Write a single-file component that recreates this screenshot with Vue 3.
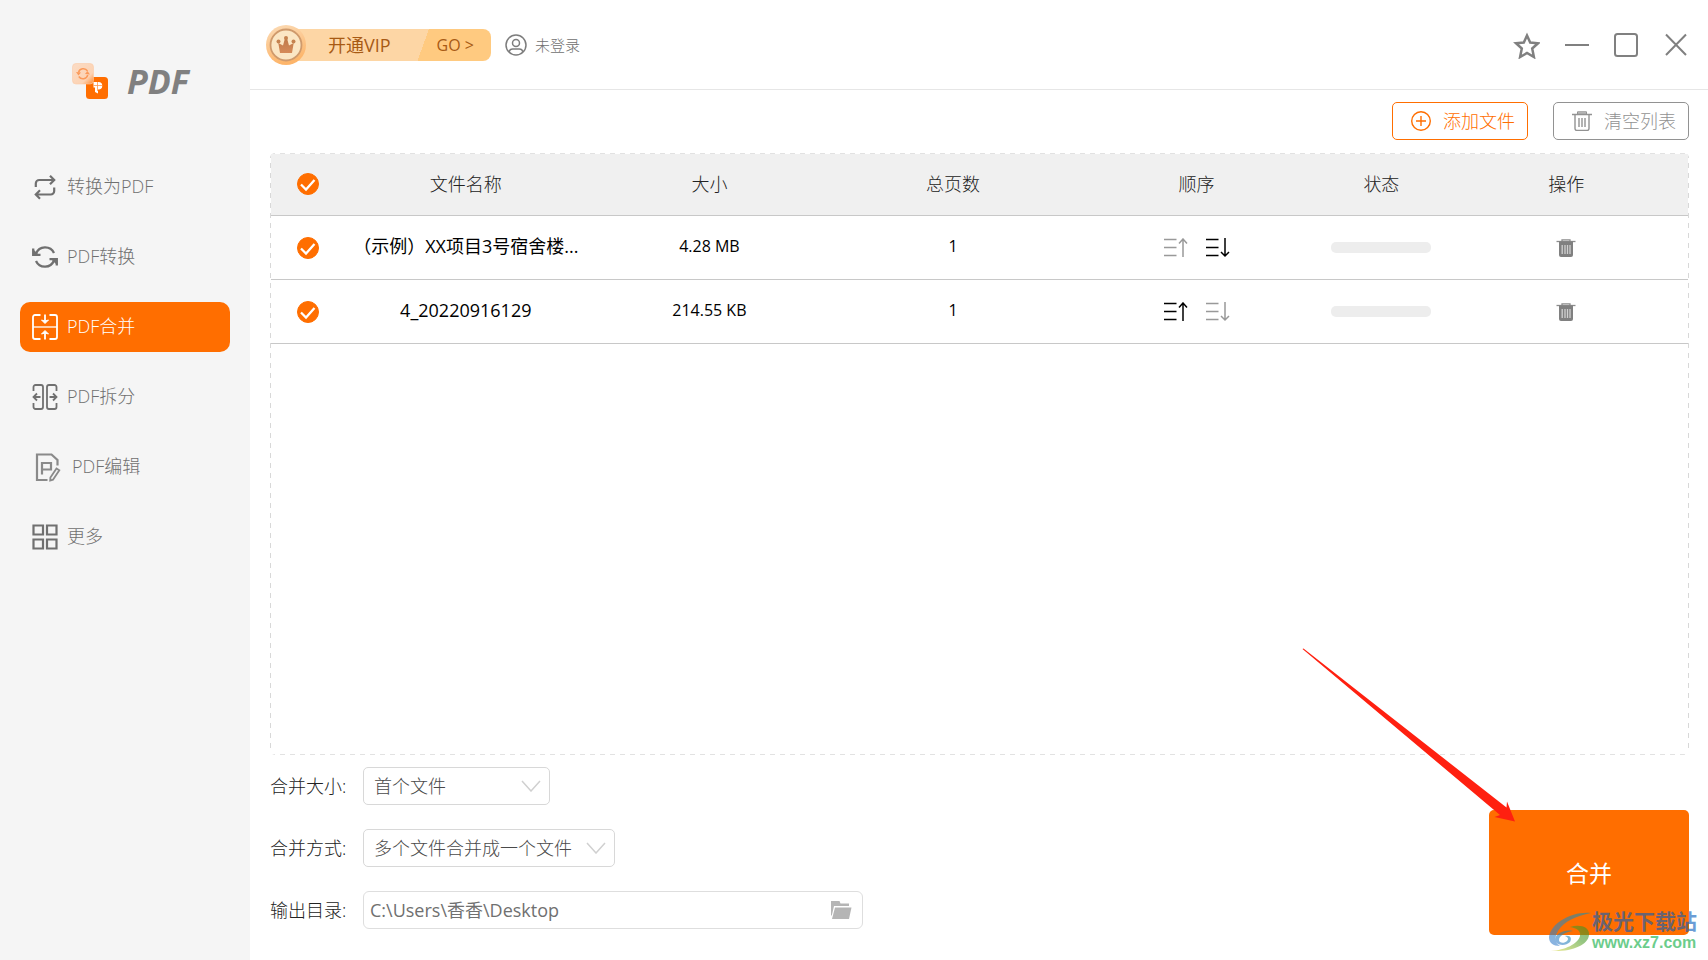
<script setup>
import { ref } from 'vue'

const navItems = [
  { id: 'to-pdf', label: '转换为PDF' },
  { id: 'convert', label: 'PDF转换' },
  { id: 'merge', label: 'PDF合并' },
  { id: 'split', label: 'PDF拆分' },
  { id: 'edit', label: 'PDF编辑' },
  { id: 'more', label: '更多' }
]
const active = ref('merge')

const files = ref([
  { name: '（示例）XX项目3号宿舍楼...', size: '4.28 MB', pages: 1, checked: true },
  { name: '4_20220916129', size: '214.55 KB', pages: 1, checked: true }
])
const allChecked = ref(true)
const mergeSize = ref('首个文件')
const mergeMode = ref('多个文件合并成一个文件')
const outputDir = ref('C:\\Users\\香香\\Desktop')
</script>

<template>
  <div class="app">
    <aside class="sidebar">
      <div class="brand">
        <svg class="brand-icon" width="36" height="36" viewBox="0 0 36 36">
          <defs>
            <linearGradient id="brandFade" x1="0" y1="0" x2="1" y2="1">
              <stop offset="0" stop-color="#fbdcc5" />
              <stop offset="0.7" stop-color="#fcd3b4" />
              <stop offset="1" stop-color="#ff8a30" />
            </linearGradient>
          </defs>
          <rect x="14" y="14" width="22" height="22" rx="3.5" fill="#ff6e00" />
          <rect x="0.5" y="0.5" width="21" height="20.5" rx="3.5" fill="url(#brandFade)" stroke="#fbcba8" stroke-width="0.6" />
          <g fill="none" stroke="#fb9a5a" stroke-width="1.5">
            <path d="M6.500 9.500a5 5 0 0 1 9-1.500" />
            <path d="M15.800 12a5 5 0 0 1-9 1.500" />
          </g>
          <path d="M4 9l5 .5-2.500 3zM18 11.500l-5-.5 2.500-3z" fill="#fb9a5a" />
          <path d="M21.500 19h5a3.700 3.700 0 0 1 0 7.500H26v4l-3-1.500v-4.500h-1.500z" fill="#fff" />
          <path d="M21.500 22.500h8.500M25.500 19v9" stroke="#ff9a50" stroke-width="0.8" />
        </svg>
        <span class="brand-name">PDF</span>
      </div>

      <nav class="nav">
        <button
          v-for="item in navItems"
          :key="item.id"
          type="button"
          class="nav-item"
          :class="{ active: active === item.id }"
          @click="active = item.id"
        >
          <svg v-if="item.id === 'to-pdf'" width="26" height="26" viewBox="0 0 26 26" fill="none" stroke="currentColor" stroke-width="2.200">
            <path d="M3.800 13V9.500a3.500 3.500 0 0 1 3.500-3.500H22M18 1.800L22.200 6 18 10.200" />
            <path d="M22.200 13.500V17a3.500 3.500 0 0 1-3.500 3.500H4M8 16.300L3.800 20.500 8 24.700" />
          </svg>
          <svg v-else-if="item.id === 'convert'" width="26" height="26" viewBox="0 0 26 26" fill="none" stroke="currentColor" stroke-width="2.300">
            <path d="M4 9.500a9.800 9.800 0 0 1 18-.5" />
            <path d="M22 16.500a9.800 9.800 0 0 1-18 .5" />
            <path d="M1.200 4.500v6.300h7.300M24.800 21.500v-6.300h-7.300" />
            <path d="M1 5l6 6H1zM25 21l-6-6h6z" fill="currentColor" stroke="none" />
          </svg>
          <svg v-else-if="item.id === 'merge'" width="26" height="26" viewBox="0 0 26 26" fill="none" stroke="currentColor" stroke-width="1.800">
            <path d="M8.500 1H3a2 2 0 0 0-2 2v20a2 2 0 0 0 2 2h5.500M17.500 1H23a2 2 0 0 1 2 2v20a2 2 0 0 1-2 2h-5.500" />
            <path d="M1 13h24" stroke-width="1.300" />
            <path d="M13 .5V8M13 25.500V18" />
            <path d="M9.500 6l3.500 3.500L16.500 6 13 7zM9.500 20l3.500-3.500 3.500 3.500L13 19z" fill="currentColor" stroke-width="1" />
          </svg>
          <svg v-else-if="item.id === 'split'" width="26" height="26" viewBox="0 0 26 26" fill="none" stroke="currentColor" stroke-width="1.800">
            <path d="M1.500 7V3a2 2 0 0 1 2-2h5.500a2 2 0 0 1 2 2v20a2 2 0 0 1-2 2H3.500a2 2 0 0 1-2-2v-4" />
            <path d="M24.500 7V3a2 2 0 0 0-2-2H17a2 2 0 0 0-2 2v20a2 2 0 0 0 2 2h5.500a2 2 0 0 0 2-2v-4" />
            <path d="M8.500 13H2M5 9.500L1.500 13 5 16.500M17.500 13H24M21 9.500l3.500 3.500-3.500 3.500" />
          </svg>
          <svg v-else-if="item.id === 'edit'" width="31" height="30" viewBox="0 0 31 30" fill="none" stroke="currentColor" stroke-width="2.200" opacity="0.8">
            <path d="M15.500 28H5V2.500h14.500l6 5.500v5.500" />
            <path d="M10 22.500V11h9v6.500h-9" />
            <path d="M24.500 16.500l2.800 1.700-6.300 9.500-2.800.8.200-3z" stroke-width="1.800" />
          </svg>
          <svg v-else width="26" height="26" viewBox="0 0 26 26" fill="none" stroke="currentColor" stroke-width="2.200">
            <path d="M1.500 1.500h9.500v9h-9.500zM15 1.500h9.500v9H15zM1.500 15.500h9.500v9h-9.500zM15 15.500h9.500v9H15z" />
          </svg>
          <span>{{ item.label }}</span>
        </button>
      </nav>
    </aside>

    <main class="main">
      <header class="topbar">
        <button type="button" class="vip">
          <svg class="medal" width="40" height="40" viewBox="0 0 40 40">
            <defs>
              <linearGradient id="medalOuter" x1="0" y1="0" x2="0.3" y2="1">
                <stop offset="0" stop-color="#fbdcb8" />
                <stop offset="1" stop-color="#fdb56a" />
              </linearGradient>
              <linearGradient id="medalCrown" x1="0" y1="0" x2="0" y2="1">
                <stop offset="0" stop-color="#c07a4a" />
                <stop offset="1" stop-color="#d58a58" />
              </linearGradient>
            </defs>
            <circle cx="20" cy="20" r="20" fill="url(#medalOuter)" />
            <circle cx="20" cy="20" r="15.500" fill="#fbe6c4" stroke="#cf9a6c" stroke-width="1.800" />
            <path d="M14 28L12.300 18l4.700 2.500 1.800-6.500h2.400l1.800 6.500 4.700-2.500L26 28z" fill="url(#medalCrown)" />
            <circle cx="12.500" cy="16.500" r="2" fill="#c5824f" />
            <circle cx="20" cy="13" r="2" fill="#c5824f" />
            <circle cx="27.500" cy="16.500" r="2" fill="#c5824f" />
          </svg>
          <span class="vip-bar">
            <span class="vip-title">开通VIP</span>
            <span class="vip-go">GO &gt;</span>
          </span>
        </button>
        <button type="button" class="login">
          <svg width="22" height="22" viewBox="0 0 22 22" fill="none" stroke="#7d7d7d" stroke-width="1.500">
            <circle cx="11" cy="11" r="10" />
            <circle cx="11" cy="9" r="3.500" />
            <path d="M4.200 17.800c.5-2.500 1.800-2.800 3.500-2.800h6.600c1.700 0 3 .3 3.500 2.800" />
          </svg>
          <span>未登录</span>
        </button>
        <div class="window-controls">
          <button type="button" aria-label="收藏">
            <svg width="28" height="28" viewBox="0 0 28 28" fill="none" stroke="#808080" stroke-width="2.500">
              <path d="M15 4.500l3.200 7 7.800.8-5.800 5.200 1.700 8.500L15 22l-6.900 4 1.700-8.500L4 12.300l7.800-.8z" />
            </svg>
          </button>
          <button type="button" aria-label="最小化">
            <svg width="28" height="28" viewBox="0 0 28 28" fill="none" stroke="#808080" stroke-width="2">
              <path d="M3 14h24" />
            </svg>
          </button>
          <button type="button" aria-label="最大化">
            <svg width="28" height="28" viewBox="0 0 28 28" fill="none" stroke="#808080" stroke-width="2">
              <rect x="3" y="3" width="22" height="22" rx="2.500" />
            </svg>
          </button>
          <button type="button" aria-label="关闭">
            <svg width="28" height="28" viewBox="0 0 28 28" fill="none" stroke="#808080" stroke-width="2">
              <path d="M4 3.500l20 20.500M24 3.500l-20 20.500" />
            </svg>
          </button>
        </div>
      </header>

      <section class="content">
        <div class="actions">
          <button type="button" class="action add">
            <svg width="20" height="20" viewBox="0 0 20 20" fill="none" stroke="currentColor" stroke-width="1.400">
              <circle cx="10" cy="10" r="9.300" />
              <path d="M5 10h10M10 5v10" />
            </svg>
            <span>添加文件</span>
          </button>
          <button type="button" class="action clear">
            <svg width="20" height="20" viewBox="0 0 20 20" fill="none" stroke="currentColor" stroke-width="1.400">
              <path d="M0 3.500h20M3 3.500V17.500a2 2 0 0 0 2 2h10a2 2 0 0 0 2-2V3.500M7 7v9M10 7v9M13 7v9" />
              <path d="M5.500 3V.8h9V3z" fill="#c4c4c4" stroke-width="1" />
            </svg>
            <span>清空列表</span>
          </button>
        </div>

        <div class="panel">
          <table class="files">
            <colgroup>
              <col class="col-check">
              <col>
              <col>
              <col>
              <col>
              <col class="col-status">
              <col>
            </colgroup>
            <thead>
              <tr>
                <th>
                  <label class="check">
                    <input v-model="allChecked" type="checkbox" aria-label="全选">
                    <svg width="22" height="22" viewBox="0 0 22 22" fill="none" stroke="#fff" stroke-width="2.300"><path d="M4 11.500l5 5 8.500-9.500" /></svg>
                  </label>
                </th>
                <th>文件名称</th>
                <th>大小</th>
                <th>总页数</th>
                <th>顺序</th>
                <th>状态</th>
                <th>操作</th>
              </tr>
            </thead>
            <tbody>
              <tr v-for="(file, index) in files" :key="file.name">
                <td>
                  <label class="check">
                    <input v-model="file.checked" type="checkbox" :aria-label="file.name">
                    <svg width="22" height="22" viewBox="0 0 22 22" fill="none" stroke="#fff" stroke-width="2.300"><path d="M4 11.500l5 5 8.500-9.500" /></svg>
                  </label>
                </td>
                <td class="text name">{{ file.name }}</td>
                <td class="text">{{ file.size }}</td>
                <td class="text">{{ file.pages }}</td>
                <td>
                  <div class="order">
                    <button type="button" aria-label="上移" :disabled="index === 0">
                      <svg width="24" height="20" viewBox="0 0 24 20" fill="none" stroke="currentColor" stroke-width="1.500">
                        <path d="M0 1.500h12.500M0 9.500h12.500M0 17.500h12.500M19 19V1M15 5.500l4-4.500 4 4.500" />
                      </svg>
                    </button>
                    <button type="button" aria-label="下移" :disabled="index === files.length - 1">
                      <svg width="24" height="20" viewBox="0 0 24 20" fill="none" stroke="currentColor" stroke-width="1.500">
                        <path d="M0 1.500h12.500M0 9.500h12.500M0 17.500h12.500M19 0v18M15 14l4 4 4-4" />
                      </svg>
                    </button>
                  </div>
                </td>
                <td><div class="progress" role="progressbar" aria-valuenow="0" aria-label="状态"></div></td>
                <td>
                  <button type="button" class="remove" aria-label="删除">
                    <svg width="20" height="18" viewBox="0 0 20 18">
                      <path d="M.5 2.500h19" stroke="#8c8c8c" stroke-width="1.300" />
                      <path d="M6 2.500V.8h8v1.700" fill="none" stroke="#8c8c8c" stroke-width="1.300" />
                      <path d="M3 2.500h14V16a2 2 0 0 1-2 2H5a2 2 0 0 1-2-2z" fill="#808080" />
                      <path d="M6.200 6v9M9 6v9M11.500 6v9M14 6v9" stroke="#d0d0d0" stroke-width="1.300" />
                    </svg>
                  </button>
                </td>
              </tr>
            </tbody>
          </table>
        </div>

        <div class="footer">
          <form class="settings" @submit.prevent>
            <div class="field">
              <label for="merge-size">合并大小:</label>
              <div class="select size">
                <select id="merge-size" v-model="mergeSize">
                  <option>首个文件</option>
                </select>
                <svg width="20" height="12" viewBox="0 0 20 12" fill="none" stroke="#d0d0d0" stroke-width="1.500"><path d="M1 1l9 10 9-10" /></svg>
              </div>
            </div>
            <div class="field">
              <label for="merge-mode">合并方式:</label>
              <div class="select mode">
                <select id="merge-mode" v-model="mergeMode">
                  <option>多个文件合并成一个文件</option>
                </select>
                <svg width="20" height="12" viewBox="0 0 20 12" fill="none" stroke="#d0d0d0" stroke-width="1.500"><path d="M1 1l9 10 9-10" /></svg>
              </div>
            </div>
            <div class="field">
              <label for="output-dir">输出目录:</label>
              <div class="path">
                <input id="output-dir" v-model="outputDir" type="text">
                <button type="button" aria-label="选择目录">
                  <svg width="21" height="18" viewBox="0 0 21 18" fill="#b5b5b5">
                    <path d="M0 0h8.500l1 2.500H18V5H3L.8 14.500H0z" />
                    <path d="M4 6.500h16.500L18 18H1z" />
                  </svg>
                </button>
              </div>
            </div>
          </form>
          <button type="button" class="merge">合并</button>
        </div>
      </section>
    </main>

    <svg class="arrow" width="214" height="174" viewBox="0 0 214 174">
      <path d="M.5 1L1.500.500L204.500 159.500L205 153.500L213 173.500L192.500 169L198 167z" fill="#ff2010" />
    </svg>

    <div class="watermark">
      <svg width="44" height="42" viewBox="0 0 44 42">
        <defs>
          <linearGradient id="swirlBlue" x1="0" y1="1" x2="1" y2="0">
            <stop offset="0" stop-color="#3f7fd0" />
            <stop offset="1" stop-color="#1a8fa8" />
          </linearGradient>
          <linearGradient id="swirlGreen" x1="0" y1="1" x2="1" y2="0">
            <stop offset="0" stop-color="#e8e050" />
            <stop offset="0.6" stop-color="#50a030" />
            <stop offset="1" stop-color="#409020" />
          </linearGradient>
        </defs>
        <path d="M43 2C24 0 3 12 1 26c0 6 4 9 11 9-5-3-6-8-2-15C16 10 28 5 43 2z" fill="url(#swirlBlue)" />
        <path d="M25 20c-9-2-18 3-18 9 0 5 10 7 15 2 2-3 1-7-5-6 3 1 4 3 2 5-3 3-8 2-8-1 0-4 6-8 14-9z" fill="url(#swirlBlue)" />
        <path d="M22 16c10-3 20 0 19 8-1 10-17 17-38 16 14-1 27-7 29-15 1-5-3-8-10-9z" fill="url(#swirlGreen)" />
      </svg>
      <div class="watermark-text">
        <strong>极光下载站</strong>
        <span>www.xz7.com</span>
      </div>
    </div>
  </div>
</template>

<style>
body {
  margin: 0;
  background: #fff;
}
</style>

<style scoped>
.app {
  position: relative;
  display: flex;
  min-height: 100vh;
  overflow: hidden;
  background: #fff;
  color: #222;
  font-family: "Open Sans", "Noto Sans CJK SC", sans-serif;
  font-size: 18px;
  font-weight: 300;
  line-height: 24px;
}
.app * {
  box-sizing: border-box;
}
button,
input,
select {
  margin: 0;
  padding: 0;
  border: 0;
  background: none;
  color: inherit;
  font: inherit;
}
svg {
  display: block;
  flex: none;
}

.sidebar {
  flex: none;
  width: 250px;
  background: #f5f5f5;
}
.brand {
  display: flex;
  align-items: center;
  gap: 19px;
  height: 162px;
  padding-left: 72px;
}
.brand-name {
  color: #808080;
  font-size: 34px;
  font-weight: 700;
  font-style: italic;
  line-height: 36px;
}
.nav {
  display: flex;
  flex-direction: column;
  gap: 20px;
  padding: 0 20px;
}
.nav-item {
  display: flex;
  align-items: center;
  gap: 9px;
  height: 50px;
  padding: 0 12px;
  border-radius: 10px;
  color: #707070;
}
.nav-item span {
  padding-bottom: 2px;
}
.nav-item.active {
  background: #ff6e00;
  color: #fff;
}

.main {
  display: flex;
  flex: 1;
  flex-direction: column;
  min-width: 0;
}
.topbar {
  display: flex;
  align-items: center;
  height: 90px;
  padding: 0 18px 0 16px;
  border-bottom: 1px solid #e6e6e6;
}
.vip {
  display: flex;
  align-items: center;
}
.medal {
  z-index: 1;
}
.vip-bar {
  display: flex;
  width: 205px;
  height: 32px;
  margin-left: -20px;
  border-radius: 0 8px 8px 0;
  background: linear-gradient(110deg, #fdd6a5 66%, #ffca80 66%);
  color: #a85a14;
  font-weight: 400;
  line-height: 32px;
}
.vip-title {
  padding-left: 42px;
}
.vip-go {
  margin-left: auto;
  padding-right: 17px;
  font-size: 16px;
}
.login {
  display: flex;
  align-items: center;
  gap: 8px;
  margin-left: 14px;
  color: #707070;
  font-size: 15px;
}
.window-controls {
  display: flex;
  gap: 22px;
  margin-left: auto;
}

.content {
  display: flex;
  flex: 1;
  flex-direction: column;
  padding: 12px 19px 25px 20px;
}
.actions {
  display: flex;
  justify-content: flex-end;
  gap: 25px;
}
.action {
  display: flex;
  align-items: center;
  gap: 12px;
  width: 136px;
  height: 38px;
  padding-left: 18px;
  border: 1px solid;
  border-radius: 5px;
}
.add {
  color: #ff6e00;
}
.clear {
  color: #929292;
}

.panel {
  flex: 1;
  margin: 13px 0 12px;
  padding: 1px;
  border-radius: 5px;
  background:
    repeating-linear-gradient(90deg, #e2e2e2 0 5px, transparent 5px 10px) top / 100% 1px no-repeat,
    repeating-linear-gradient(90deg, #e2e2e2 0 5px, transparent 5px 10px) bottom / 100% 1px no-repeat,
    repeating-linear-gradient(#d8d8d8 0 5px, transparent 5px 10px) left / 1px 100% no-repeat,
    repeating-linear-gradient(#d8d8d8 0 5px, transparent 5px 10px) right / 1px 100% no-repeat;
}
.files {
  width: 100%;
  table-layout: fixed;
  border-spacing: 0;
}
.col-check {
  width: 73px;
}
.col-status {
  width: 126px;
}
th,
td {
  height: 64px;
  padding: 0;
  border-bottom: 1px solid #c8c8c8;
  text-align: center;
  vertical-align: middle;
}
th {
  height: 62px;
  padding-bottom: 2px;
  background: #f0f0f0;
  font-weight: inherit;
}
.text {
  padding-bottom: 4px;
  color: #000;
  font-size: 16px;
  font-weight: 400;
  white-space: nowrap;
}
.name {
  font-size: 18px;
}
.check {
  display: grid;
  justify-content: center;
}
.check input,
.check svg {
  grid-area: 1 / 1;
}
.check input {
  width: 22px;
  height: 22px;
  border: 1px solid #ccc;
  border-radius: 11px;
  appearance: none;
}
.check input:checked {
  border-color: #ff6e00;
  background: #ff6e00;
}
.check svg {
  pointer-events: none;
}
.order {
  display: flex;
  justify-content: center;
  gap: 18px;
  color: #000;
}
.order button:disabled {
  color: #999;
}
.progress {
  width: 100px;
  height: 11px;
  margin: 0 auto;
  border-radius: 5px;
  background: #ededed;
}
.remove {
  display: block;
  margin: 0 auto;
}

.footer {
  display: flex;
  align-items: flex-end;
  justify-content: space-between;
}
.settings {
  display: flex;
  flex-direction: column;
  gap: 24px;
  padding-bottom: 6px;
}
.field {
  display: flex;
  align-items: center;
}
.field label {
  width: 93px;
  white-space: nowrap;
}
.select {
  position: relative;
}
.size {
  width: 187px;
}
.mode {
  width: 252px;
}
.select select {
  width: 100%;
  height: 38px;
  padding: 0 36px 0 10px;
  border: 1px solid #d8d8d8;
  border-radius: 5px;
  color: #4a4a4a;
  appearance: none;
}
.select svg {
  position: absolute;
  top: 13px;
  right: 9px;
  pointer-events: none;
}
.path {
  display: flex;
  align-items: center;
  width: 500px;
  height: 38px;
  padding: 0 10px 0 6px;
  border: 1px solid #dedede;
  border-radius: 6px;
  color: #707070;
  font-weight: 400;
}
.path input {
  flex: 1;
  min-width: 0;
}
.merge {
  width: 200px;
  height: 125px;
  border-radius: 5px;
  background: #ff6e00;
  color: #fff;
  font-size: 23px;
  font-weight: 400;
}

.arrow {
  position: absolute;
  right: 192px;
  bottom: 138px;
  pointer-events: none;
}
.watermark {
  position: absolute;
  right: 11px;
  bottom: 6px;
  display: flex;
  align-items: center;
  opacity: 0.6;
  pointer-events: none;
}
.watermark-text {
  display: flex;
  flex-direction: column;
}
.watermark strong {
  color: #085dbb;
  font-size: 21px;
  font-weight: 700;
  line-height: 22px;
}
.watermark span {
  color: #08ac3f;
  font-family: "Liberation Sans", Arial, sans-serif;
  font-size: 16px;
  font-weight: 700;
  line-height: 22px;
}
</style>
